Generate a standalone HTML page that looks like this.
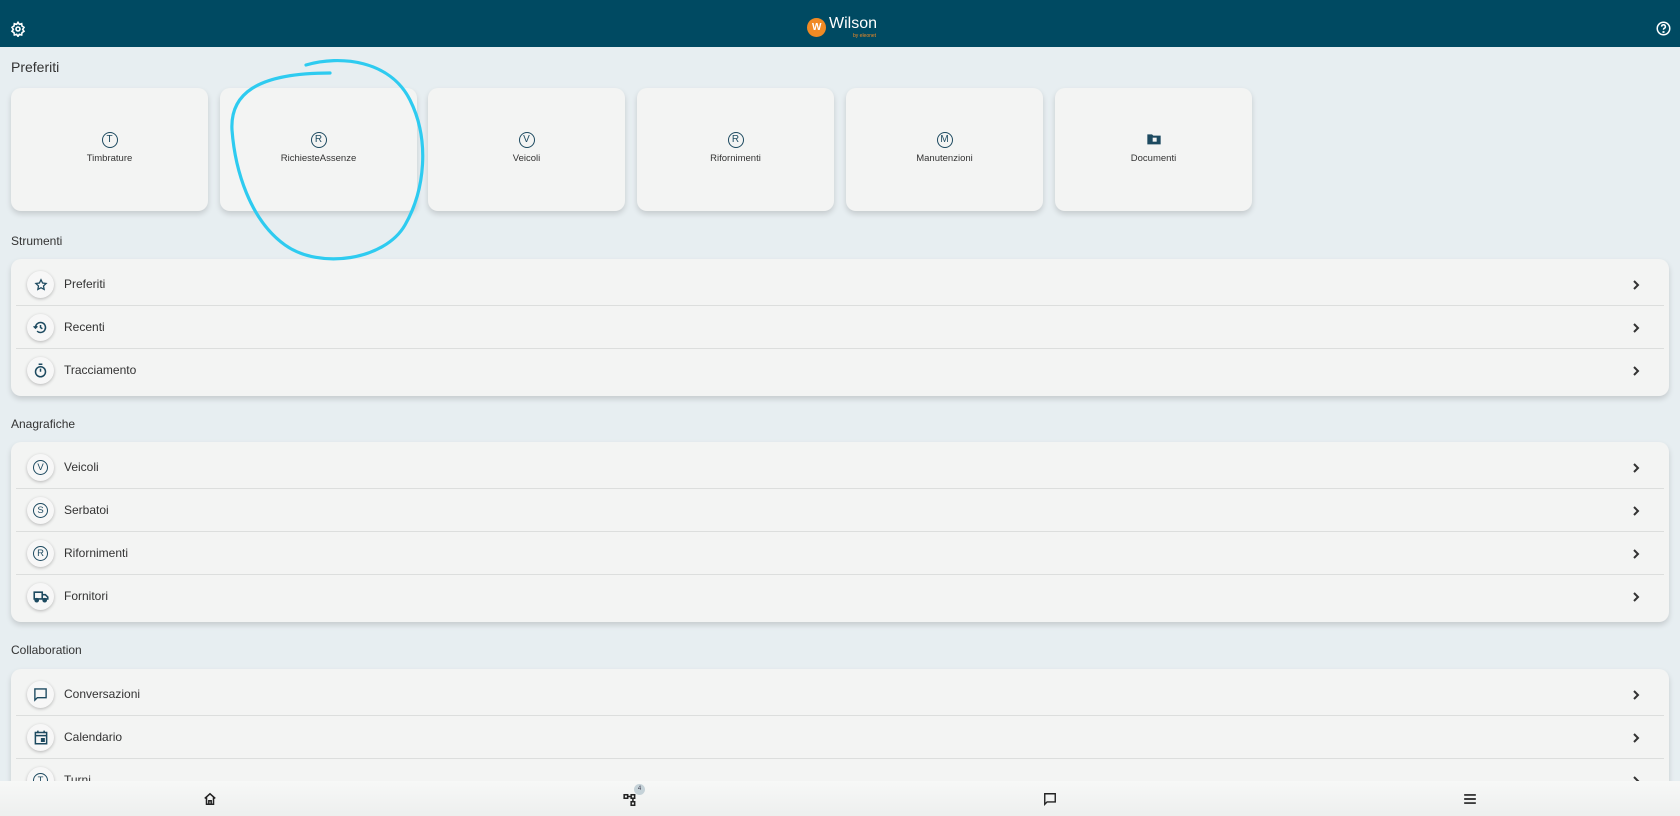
<!DOCTYPE html>
<html style="width:1680px;height:816px;overflow:hidden"><head><meta charset="utf-8"><style>
*{box-sizing:border-box;margin:0;padding:0}
body{width:1680px;height:816px;overflow:hidden;background:#e7eef1;font-family:"Liberation Sans",sans-serif;color:#222;position:relative}
.hdr{position:absolute;left:0;top:0;width:1680px;height:47px;background:#004a62}
.lbl{position:absolute;left:11px;font-size:13px;color:#333}
.card{position:absolute;top:88px;width:197px;height:123px;background:#f3f4f3;border-radius:10px;box-shadow:0 3px 6px rgba(0,0,0,.15);text-align:center}
.card .ic{position:absolute;left:50%;top:44px;margin-left:-8px;width:16px;height:16px;border:1.3px solid #1d4a60;border-radius:50%;font-size:10px;line-height:14px;color:#1d4a60}
.card .t{position:absolute;left:0;right:0;top:65px;font-size:9.5px;color:#333}
.panel{position:absolute;left:11px;width:1658px;background:#f3f4f3;border-radius:10px;box-shadow:0 3px 6px rgba(0,0,0,.15);padding:4px 0}
.row{position:relative;height:43px;border-bottom:1px solid #dcdedd;margin-left:5px;margin-right:5px}
.row:last-child{border-bottom:none}
.row .c{position:absolute;left:11px;top:8px;width:27px;height:27px;border-radius:50%;background:#f7f7f7;box-shadow:0 1px 3px rgba(0,0,0,.25);display:flex;align-items:center;justify-content:center}
.row .c .l{width:15px;height:15px;border:1.3px solid #1d4a60;border-radius:50%;font-size:9.5px;line-height:13px;text-align:center;color:#1d4a60}
.row .n{position:absolute;left:48px;top:14px;font-size:12px;color:#333}
.row .ch{position:absolute;right:24px;top:16px}
.nav{position:absolute;left:0;top:781px;width:1680px;height:40px;background:linear-gradient(#f7f8f7,#eceeed);z-index:5}
</style></head><body>
<div class="hdr">
<svg style="position:absolute;left:10px;top:21px" width="16" height="16" viewBox="0 0 24 24" fill="none" stroke="#fff" stroke-width="2.4"><circle cx="12" cy="12" r="3"/><path d="M12 2l2 3 3.5-1 .5 3.5 3 2-2 3 2 3-3 2-.5 3.5-3.5-1-2 3-2-3-3.5 1-.5-3.5-3-2 2-3-2-3 3-2 .5-3.5 3.5 1z"/></svg>
<div style="position:absolute;left:807px;top:18px;width:19px;height:19px;border-radius:50%;background:#f08a24"></div>
<div style="position:absolute;left:812px;top:22px;font-size:10px;font-weight:bold;color:#fff">W</div>
<div style="position:absolute;left:829px;top:15px;font-size:16px;color:#fff">Wilson</div>
<div style="position:absolute;left:853px;top:33px;font-size:5px;color:#f08a24">by eleonet</div>
<svg style="position:absolute;left:1656px;top:21px" width="15" height="15" viewBox="0 0 24 24" fill="none" stroke="#fff" stroke-width="2.4"><circle cx="12" cy="12" r="10"/><path d="M9 9a3 3 0 1 1 4 2.8c-1 .4-1 1.2-1 2.2"/><circle cx="12" cy="17.5" r=".6" fill="#fff"/></svg>
</div>
<div class="lbl" style="top:59px;font-size:14px">Preferiti</div>
<div class="card" style="left:11px"><div class="ic">T</div><div class="t">Timbrature</div></div>
<div class="card" style="left:220px"><div class="ic">R</div><div class="t">RichiesteAssenze</div></div>
<div class="card" style="left:428px"><div class="ic">V</div><div class="t">Veicoli</div></div>
<div class="card" style="left:637px"><div class="ic">R</div><div class="t">Rifornimenti</div></div>
<div class="card" style="left:846px"><div class="ic">M</div><div class="t">Manutenzioni</div></div>
<div class="card" style="left:1055px"><div class="ic" style="border:none"><svg width="16" height="14" viewBox="0 0 24 20"><path d="M2 3h7l2 2h11v13H2z" fill="#1d4a60"/><rect x="10" y="8" width="6" height="6" fill="#f3f4f3"/></svg></div><div class="t">Documenti</div></div>

<div class="lbl" style="top:234px;font-size:12px">Strumenti</div>
<div class="panel" style="top:259px">
<div class="row"><div class="c"><svg width="14" height="14" viewBox="0 0 24 24" fill="none" stroke="#1d4a60" stroke-width="2.2"><path d="M12 3l2.7 5.6 6.1.8-4.5 4.2 1.1 6-5.4-3-5.4 3 1.1-6L3.2 9.4l6.1-.8z"/></svg></div><div class="n">Preferiti</div><svg class="ch" width="8" height="12" viewBox="0 0 8 12"><path d="M2 2l4 4-4 4" stroke="#333" stroke-width="2" fill="none"/></svg></div>
<div class="row"><div class="c"><svg width="15" height="15" viewBox="0 0 24 24" fill="none" stroke="#1d4a60" stroke-width="2.4"><path d="M4 12a8 8 0 1 1 2.5 5.8"/><path d="M1 10l3 3 3-3"/><path d="M12 8v4l3 2"/></svg></div><div class="n">Recenti</div><svg class="ch" width="8" height="12" viewBox="0 0 8 12"><path d="M2 2l4 4-4 4" stroke="#333" stroke-width="2" fill="none"/></svg></div>
<div class="row"><div class="c"><svg width="15" height="15" viewBox="0 0 24 24" fill="none" stroke="#1d4a60" stroke-width="2.4"><circle cx="12" cy="14" r="8"/><path d="M9 2h6M12 14V9"/></svg></div><div class="n">Tracciamento</div><svg class="ch" width="8" height="12" viewBox="0 0 8 12"><path d="M2 2l4 4-4 4" stroke="#333" stroke-width="2" fill="none"/></svg></div>
</div>

<div class="lbl" style="top:417px;font-size:12px">Anagrafiche</div>
<div class="panel" style="top:442px">
<div class="row"><div class="c"><div class="l">V</div></div><div class="n">Veicoli</div><svg class="ch" width="8" height="12" viewBox="0 0 8 12"><path d="M2 2l4 4-4 4" stroke="#333" stroke-width="2" fill="none"/></svg></div>
<div class="row"><div class="c"><div class="l">S</div></div><div class="n">Serbatoi</div><svg class="ch" width="8" height="12" viewBox="0 0 8 12"><path d="M2 2l4 4-4 4" stroke="#333" stroke-width="2" fill="none"/></svg></div>
<div class="row"><div class="c"><div class="l">R</div></div><div class="n">Rifornimenti</div><svg class="ch" width="8" height="12" viewBox="0 0 8 12"><path d="M2 2l4 4-4 4" stroke="#333" stroke-width="2" fill="none"/></svg></div>
<div class="row"><div class="c"><svg width="16" height="13" viewBox="0 0 26 20" fill="none" stroke="#1d4a60" stroke-width="2.6"><path d="M2 3h13v11H2zM15 7h5l4 4v3h-9"/><circle cx="6" cy="16" r="2.5" fill="#1d4a60"/><circle cx="19" cy="16" r="2.5" fill="#1d4a60"/></svg></div><div class="n">Fornitori</div><svg class="ch" width="8" height="12" viewBox="0 0 8 12"><path d="M2 2l4 4-4 4" stroke="#333" stroke-width="2" fill="none"/></svg></div>
</div>

<div class="lbl" style="top:643px;font-size:12px">Collaboration</div>
<div class="panel" style="top:669px;height:150px">
<div class="row"><div class="c"><svg width="15" height="15" viewBox="0 0 24 24" fill="none" stroke="#1d4a60" stroke-width="2.2"><path d="M3 3h18v14H7l-4 4z"/></svg></div><div class="n">Conversazioni</div><svg class="ch" width="8" height="12" viewBox="0 0 8 12"><path d="M2 2l4 4-4 4" stroke="#333" stroke-width="2" fill="none"/></svg></div>
<div class="row"><div class="c"><svg width="14" height="15" viewBox="0 0 22 24" fill="none" stroke="#1d4a60" stroke-width="2.4"><rect x="2" y="4" width="18" height="18"/><path d="M2 9h18M6 1v4M16 1v4"/><rect x="12" y="14" width="4" height="4" fill="#1d4a60"/></svg></div><div class="n">Calendario</div><svg class="ch" width="8" height="12" viewBox="0 0 8 12"><path d="M2 2l4 4-4 4" stroke="#333" stroke-width="2" fill="none"/></svg></div>
<div class="row"><div class="c"><div class="l">T</div></div><div class="n">Turni</div><svg class="ch" width="8" height="12" viewBox="0 0 8 12"><path d="M2 2l4 4-4 4" stroke="#333" stroke-width="2" fill="none"/></svg></div>
</div>

<div class="nav">
<svg style="position:absolute;left:203px;top:11px" width="14" height="14" viewBox="0 0 24 24" fill="none" stroke="#222" stroke-width="2.6"><path d="M3 11l9-8 9 8M6 9v12h12V9M10 21v-6h4v6"/></svg>
<svg style="position:absolute;left:623px;top:12px" width="14" height="14" viewBox="0 0 24 24" fill="none" stroke="#222" stroke-width="2.6"><rect x="2" y="3" width="6" height="6"/><rect x="14" y="3" width="6" height="6"/><rect x="14" y="15" width="6" height="6"/><path d="M8 6h6M17 9v6"/></svg>
<div style="position:absolute;left:634px;top:3px;width:11px;height:11px;border-radius:50%;background:#c5d2d8;font-size:6px;line-height:11px;text-align:center;color:#445">4</div>
<svg style="position:absolute;left:1043px;top:11px" width="14" height="14" viewBox="0 0 24 24" fill="none" stroke="#222" stroke-width="2.4"><path d="M3 3h18v14H7l-4 4z"/></svg>
<svg style="position:absolute;left:1463px;top:12px" width="14" height="12" viewBox="0 0 24 20" fill="none" stroke="#222" stroke-width="2.8"><path d="M2 3h20M2 10h20M2 17h20"/></svg>
</div>

<svg style="position:absolute;left:0;top:0;z-index:6" width="1680" height="816" viewBox="0 0 1680 816" fill="none" stroke="#2ecbf0" stroke-width="3.2" stroke-linecap="round">
<path d="M306 65 C340 55 390 60 410 100 C430 140 425 190 405 225 C385 260 320 270 285 245 C250 220 235 170 232 130 C230 95 255 73 330 73"/>
</svg>
</body></html>
